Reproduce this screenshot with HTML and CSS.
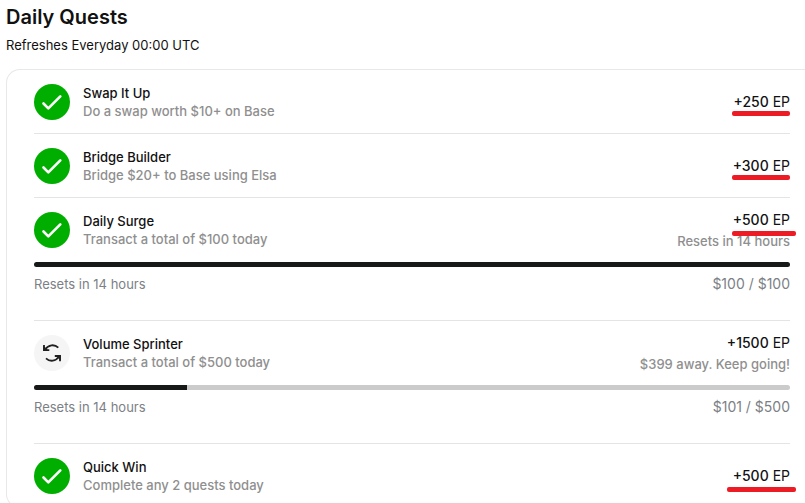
FILE: index.html
```
<!DOCTYPE html>
<html lang="en">
<head>
  <meta charset="UTF-8">
  <meta name="viewport" content="width=device-width, initial-scale=1.0">
  <title>Daily Quests</title>
  <link rel="stylesheet" href="styles.css">
</head>
<body>
  <main class="quests-page">
    <h1>Daily Quests</h1>
    <p class="refresh-note">Refreshes Everyday 00:00 UTC</p>

    <ul class="quest-list">
      <li class="quest">
        <div class="quest-row">
          <svg class="quest-icon" viewBox="0 0 36 36" aria-hidden="true">
            <circle cx="18" cy="18" r="18" fill="#00ae00"/>
            <path d="M9.500 19.500l4.800 4.800L26.300 12.300" fill="none" stroke="#fff" stroke-width="2.600" stroke-linecap="round" stroke-linejoin="round"/>
          </svg>
          <div class="quest-info">
            <h2>Swap It Up</h2>
            <p>Do a swap worth $10+ on Base</p>
          </div>
          <div class="quest-reward">
            <p class="points marked"><strong>+250</strong> EP</p>
          </div>
        </div>
      </li>

      <li class="quest">
        <div class="quest-row">
          <svg class="quest-icon" viewBox="0 0 36 36" aria-hidden="true">
            <circle cx="18" cy="18" r="18" fill="#00ae00"/>
            <path d="M9.500 19.500l4.800 4.800L26.300 12.300" fill="none" stroke="#fff" stroke-width="2.600" stroke-linecap="round" stroke-linejoin="round"/>
          </svg>
          <div class="quest-info">
            <h2>Bridge Builder</h2>
            <p>Bridge $20+ to Base using Elsa</p>
          </div>
          <div class="quest-reward">
            <p class="points marked"><strong>+300</strong> EP</p>
          </div>
        </div>
      </li>

      <li class="quest">
        <div class="quest-row">
          <svg class="quest-icon" viewBox="0 0 36 36" aria-hidden="true">
            <circle cx="18" cy="18" r="18" fill="#00ae00"/>
            <path d="M9.500 19.500l4.800 4.800L26.300 12.300" fill="none" stroke="#fff" stroke-width="2.600" stroke-linecap="round" stroke-linejoin="round"/>
          </svg>
          <div class="quest-info">
            <h2>Daily Surge</h2>
            <p>Transact a total of $100 today</p>
          </div>
          <div class="quest-reward">
            <p class="points marked marked-long"><strong>+500</strong> EP</p>
            <p class="reward-note">Resets in 14 hours</p>
          </div>
        </div>
        <div class="progress">
          <div class="progress-fill" style="width: 100%"></div>
        </div>
        <div class="progress-info">
          <span>Resets in 14 hours</span>
          <span class="progress-amount">$100 / $100</span>
        </div>
      </li>

      <li class="quest">
        <div class="quest-row">
          <svg class="quest-icon" viewBox="0 0 36 36" aria-hidden="true">
            <circle cx="18" cy="18" r="18" fill="#f5f5f5"/>
            <g fill="none" stroke="#202020" stroke-width="1.800">
              <path d="M11 14.500c3.500-5 9.500-5.500 13.300-1.800"/>
              <path d="M10 10v5.200h5.300"/>
              <path d="M12 23.300c4 3.800 9.800 3.200 13.300-2"/>
              <path d="M20.800 21h5.200v5.200"/>
            </g>
            <path d="M9.200 10.500v5.500h5.500zM26.800 25.700v-5.500h-5.500z" fill="#202020"/>
          </svg>
          <div class="quest-info">
            <h2>Volume Sprinter</h2>
            <p>Transact a total of $500 today</p>
          </div>
          <div class="quest-reward">
            <p class="points"><strong>+1500</strong> EP</p>
            <p class="reward-note">$399 away. Keep going!</p>
          </div>
        </div>
        <div class="progress">
          <div class="progress-fill" style="width: 20.2%"></div>
        </div>
        <div class="progress-info">
          <span>Resets in 14 hours</span>
          <span class="progress-amount">$101 / $500</span>
        </div>
      </li>

      <li class="quest">
        <div class="quest-row">
          <svg class="quest-icon" viewBox="0 0 36 36" aria-hidden="true">
            <circle cx="18" cy="18" r="18" fill="#00ae00"/>
            <path d="M9.500 19.500l4.800 4.800L26.300 12.300" fill="none" stroke="#fff" stroke-width="2.600" stroke-linecap="round" stroke-linejoin="round"/>
          </svg>
          <div class="quest-info">
            <h2>Quick Win</h2>
            <p>Complete any 2 quests today</p>
          </div>
          <div class="quest-reward">
            <p class="points marked marked-long marked-early"><strong>+500</strong> EP</p>
          </div>
        </div>
      </li>
    </ul>
  </main>
</body>
</html>
```
FILE: styles.css
```
* {
  box-sizing: border-box;
}
body {
  margin: 0;
  background: #fff;
  color: #111;
  font-family: Inter, "Liberation Sans", sans-serif;
  font-size: 13px;
  line-height: 18px;
  overflow: hidden;
}
h1, h2, p {
  margin: 0;
}
.quests-page {
  padding: 5px 0 0 6px;
}
h1 {
  font-size: 20px;
  line-height: 24px;
  font-weight: 600;
}
.refresh-note {
  margin-top: 7px;
}
.quest-list {
  list-style: none;
  margin: 15px 0 0;
  padding: 0 15px 0 27px;
  border: 1px solid #e8e8e8;
  border-right: 0;
  border-radius: 14px 0 0 14px;
}
.quest {
  padding: 14px 0 13px;
}
.quest + .quest {
  border-top: 1px solid #e4e4e4;
}
.quest-row {
  display: flex;
  align-items: center;
  gap: 13px;
  height: 36px;
}
.quest-icon {
  flex: none;
  width: 36px;
  height: 36px;
}
.quest-info {
  flex: 1;
}
.quest-info h2 {
  font-size: 13px;
  line-height: 18px;
  font-weight: 500;
}
.quest-info p,
.reward-note {
  color: #8f8f8f;
  font-weight: 500;
}
.quest-reward {
  text-align: right;
}
.points {
  position: relative;
  width: fit-content;
  margin-left: auto;
  font-size: 14px;
}
.points strong {
  font-weight: 500;
}
.reward-note {
  margin-top: 3px;
}

/* red marker line under the points */
.marked::after {
  content: "";
  position: absolute;
  left: -1px;
  right: 0;
  bottom: -5px;
  height: 5px;
  border-radius: 2px;
  background: #ed1c24;
}
.marked-long::after {
  right: -6px;
  bottom: -7px;
}
.marked-early::after {
  left: -6px;
}

.progress {
  height: 5px;
  margin-top: 14px;
  border-radius: 3px;
  background: #cbcbcb;
  overflow: hidden;
}
.progress-fill {
  height: 100%;
  background: #171919;
}
.progress-info {
  display: flex;
  justify-content: space-between;
  margin: 8px 0 14px;
  color: #7c7f86;
}
.progress-amount {
  font-size: 14px;
}
```
